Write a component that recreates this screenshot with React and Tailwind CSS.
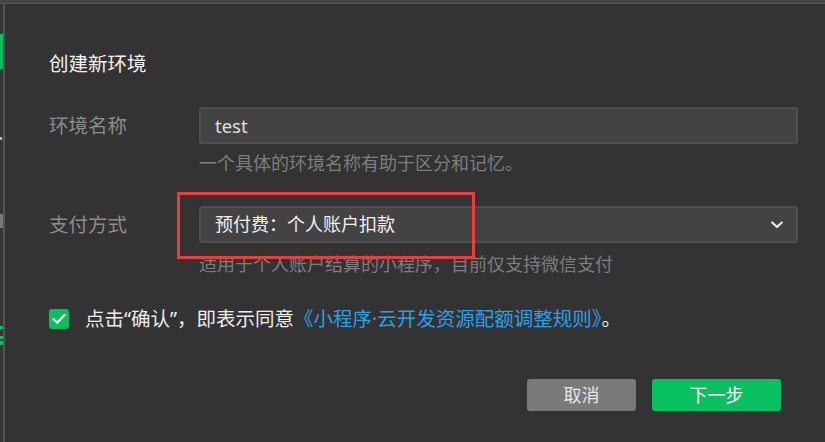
export default function App() {
  const font = { fontFamily: '"Noto Sans", "Noto Sans CJK SC", "Microsoft YaHei", sans-serif' };
  return (
    <div className="w-[825px] h-[442px] overflow-hidden bg-[#333333] flex flex-col relative" style={font}>
      <div className="h-[4px] bg-[#464646] border-b border-[#575757] shrink-0" />
      <div className="flex flex-1 min-h-0">
        <div className="w-[3px] bg-[#363636] flex flex-col shrink-0">
          <div className="mt-[30px] h-[35px] bg-[#07c160]" />
          <div className="mt-[68px] h-[3px] w-[2px] bg-[#bbbbbb]" />
          <div className="mt-[74px] h-[14px] bg-[#777777]" />
          <div className="mt-[98px] h-[3px] bg-[#07c160]" />
          <div className="mt-[7px] h-[3px] bg-[#07c160]" />
          <div className="mt-[2px] h-[4px] bg-[#07c160]" />
        </div>
        <div className="w-[2px] bg-[#555555] shrink-0" />
        <div className="flex-1 flex flex-col pl-[44px] pr-[27px]">
          <div className="mt-[46px] text-[19.5px] leading-[28px] text-[#f2f2f2]">创建新环境</div>

          <div className="mt-[29px] flex items-center">
            <div className="w-[150px] text-[19.5px] leading-[28px] text-[#8c8c8c]">环境名称</div>
            <div className="flex-1 h-[37px] bg-[#434343] border-2 border-[#4e4e4e] rounded-[3px] flex items-center pl-[14px] text-[18.5px] text-[#e0e0e0]">
              test
            </div>
          </div>
          <div className="ml-[150px] mt-[7px] text-[18px] leading-[24px] text-[#7d7d7d]">
            一个具体的环境名称有助于区分和记忆。
          </div>

          <div className="mt-[31px] flex items-center">
            <div className="w-[150px] text-[19.5px] leading-[28px] text-[#8c8c8c]">支付方式</div>
            <div className="flex-1 h-[37px] bg-[#434343] border-2 border-[#4e4e4e] rounded-[3px] flex items-center justify-between pl-[14px] pr-[13px] text-[18px] text-[#f0f0f0]">
              <span>预付费：个人账户扣款</span>
              <svg width="12" height="8" viewBox="0 0 12 8" fill="none">
                <path d="M1.2 1.5 L6 6 L10.8 1.5" stroke="#e8e8e8" strokeWidth="2.2" strokeLinecap="round" strokeLinejoin="round" />
              </svg>
            </div>
          </div>
          <div className="ml-[150px] mt-[9px] text-[18px] leading-[24px] text-[#7d7d7d]">
            适用于个人账户结算的小程序，目前仅支持微信支付
          </div>

          <div className="mt-[29px] flex items-center">
            <div className="w-[20px] h-[20px] rounded-[3px] bg-[#07c160] flex items-center justify-center">
              <svg width="14" height="12" viewBox="0 0 14 12" fill="none">
                <path d="M1.5 6.2 L5.2 9.8 L12.5 2" stroke="#ffffff" strokeWidth="2.2" strokeLinecap="round" strokeLinejoin="round" />
              </svg>
            </div>
            <div className="ml-[16px] text-[19.5px] leading-[28px] text-[#ececec]">
              点击“确认”，即表示同意<span className="text-[#2aa0e8]">《小程序·云开发资源配额调整规则》</span>。
            </div>
          </div>

          <div className="mt-[46px] flex justify-end gap-[16px] pr-[17px]">
            <div className="w-[109px] h-[32px] rounded-[3px] bg-[#7a7a7a] flex items-center justify-center text-[18px] text-[#e6e6e6]">取消</div>
            <div className="w-[129px] h-[32px] rounded-[3px] bg-[#07c160] flex items-center justify-center text-[18px] text-white">下一步</div>
          </div>
        </div>
      </div>
      <div className="absolute left-[177px] top-[192px] w-[298px] h-[67px] border-[3px] border-[#ee3b3b] pointer-events-none" />
    </div>
  );
}
